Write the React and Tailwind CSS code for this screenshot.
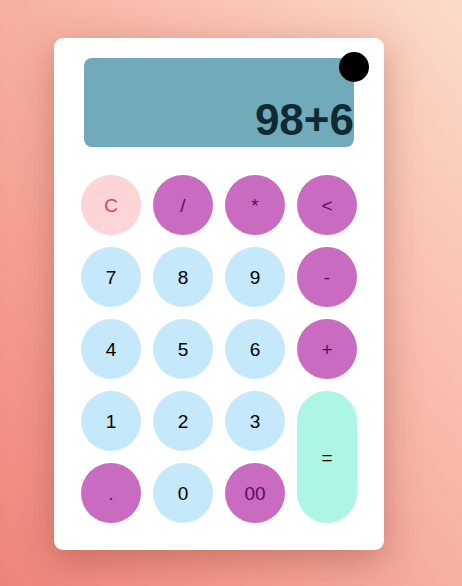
const keys = [
  { label: "C", kind: "clear" },
  { label: "/", kind: "op" },
  { label: "*", kind: "op" },
  { label: "<", kind: "op" },
  { label: "7", kind: "num" },
  { label: "8", kind: "num" },
  { label: "9", kind: "num" },
  { label: "-", kind: "op" },
  { label: "4", kind: "num" },
  { label: "5", kind: "num" },
  { label: "6", kind: "num" },
  { label: "+", kind: "op" },
  { label: "1", kind: "num" },
  { label: "2", kind: "num" },
  { label: "3", kind: "num" },
  { label: "=", kind: "equals" },
  { label: ".", kind: "op" },
  { label: "0", kind: "num" },
  { label: "00", kind: "op" },
];

const styles = {
  num: "bg-[#c5e9fa] text-black h-[60px]",
  op: "bg-[#c86bc1] text-[#5c0a5c] h-[60px]",
  clear: "bg-[#fdd4d7] text-[#c4504d] h-[60px]",
  equals: "bg-[#adf6e6] text-black row-span-2",
};

const Key = ({ label, kind }) => (
  <button
    className={`${styles[kind]} flex w-[60px] items-center justify-center rounded-full text-[19px] leading-none`}
  >
    {label}
  </button>
);

const App = () => {
  return (
    <div
      className="min-h-[586px] w-full bg-gradient-to-tr from-[#ee8479] to-[#fbdac9] pl-[54px] pt-[38px]"
      style={{ fontFamily: '"Liberation Sans", Arial, sans-serif' }}
    >
      <div className="w-[330px] rounded-[9px] bg-white pb-[27px] pl-[27px] pr-[28px] pt-[20px] shadow-[0_10px_35px_rgba(120,40,30,0.35)]">
        <div className="relative ml-[3px] flex h-[89px] w-[270px] items-end justify-end rounded-[8px] bg-[#70aabb] pb-[5px]">
          <span className="text-[44px] font-bold leading-none text-[#0f2a33]">98+6</span>
          <div className="absolute right-[-15px] top-[-6px] h-[30px] w-[30px] rounded-full bg-black" />
        </div>
        <div className="mt-[28px] grid grid-cols-[repeat(4,60px)] gap-[12px]">
          {keys.map(k => (
            <Key key={k.label} {...k} />
          ))}
        </div>
      </div>
    </div>
  );
};

export default App;
